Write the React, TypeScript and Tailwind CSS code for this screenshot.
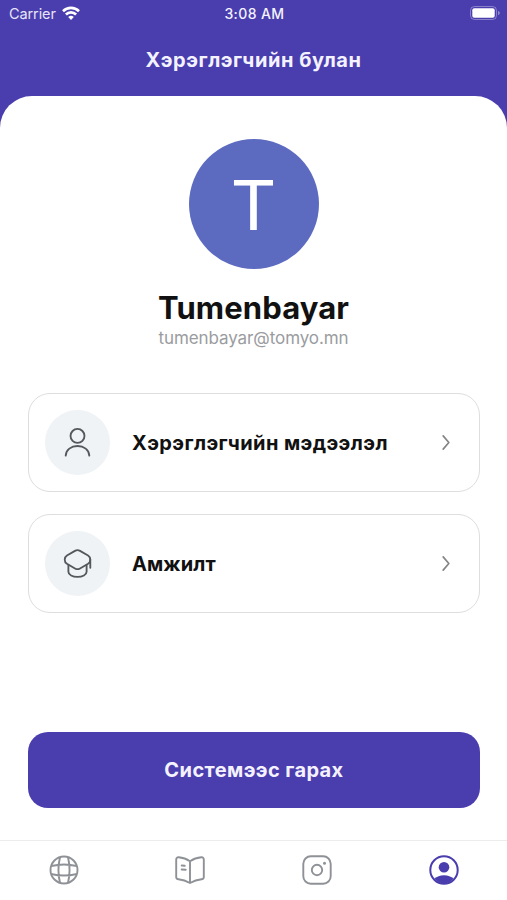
import React from 'react';

type IconProps = { className?: string };

const WifiIcon: React.FC<IconProps> = ({ className }) => (
  <svg className={className} viewBox="0 0 18 14" fill="none" stroke="currentColor" strokeWidth="2.6">
    <path d="M1 5.200a11.400 11.400 0 0 1 16 0" />
    <path d="M3.900 8.500a7.200 7.200 0 0 1 10.200 0" />
    <path d="M9 13.900 6.200 11.100a4 4 0 0 1 5.600 0z" fill="currentColor" stroke="none" />
  </svg>
);

const BatteryIcon: React.FC<IconProps> = ({ className }) => (
  <svg className={className} viewBox="0 0 30 14" fill="none">
    <rect x="0.5" y="0.5" width="26" height="13" rx="4" stroke="#fff" strokeOpacity="0.35" />
    <rect x="2.3" y="2.3" width="22.4" height="9.4" rx="2" fill="#fff" />
    <path d="M28 5v4c1.2-.3 1.8-1 1.8-2S29.200 5.300 28 5z" fill="#fff" fillOpacity="0.4" />
  </svg>
);

const UserIcon: React.FC<IconProps> = ({ className }) => (
  <svg className={className} viewBox="0 0 32 32" fill="none" stroke="currentColor" strokeWidth="1.9" strokeLinecap="round">
    <circle cx="16" cy="9.2" r="7.2" />
    <path d="M3.800 29.500C4.200 23.600 9.300 19.600 16 19.600s11.800 4 12.200 9.900" />
  </svg>
);

const GraduationIcon: React.FC<IconProps> = ({ className }) => (
  <svg className={className} viewBox="0 0 32 32" fill="none" stroke="currentColor" strokeWidth="1.9" strokeLinecap="round" strokeLinejoin="round">
    <path d="M13.400 3q2.600-1.500 5.200 0l8.300 4.800Q29.200 9.300 29.200 12t-2.300 4.200l-8.300 4.900q-2.600 1.500-5.200 0l-8.300-4.900Q2.800 14.700 2.800 12t2.300-4.200z" />
    <path d="M6.600 17.500v7c0 3.200 4.300 5.300 9.400 5.300s9.400-2.100 9.400-5.300v-7M29.200 12v8.500" />
  </svg>
);

const ChevronIcon: React.FC<IconProps> = ({ className }) => (
  <svg className={className} viewBox="0 0 10 18" fill="none" stroke="currentColor" strokeWidth="1.800" strokeLinecap="round" strokeLinejoin="round">
    <path d="m2 2 6 7-6 7" />
  </svg>
);

const GlobeIcon: React.FC<IconProps> = ({ className }) => (
  <svg className={className} viewBox="0 0 30 30" fill="none" stroke="currentColor" strokeWidth="1.900">
    <circle cx="15" cy="15" r="13.500" />
    <path d="M11 2.200c-2 8.200-2 17.400 0 25.600M19 2.200c2 8.200 2 17.400 0 25.600M2.200 11c8.200-2 17.400-2 25.600 0M2.200 19c8.200 2 17.400 2 25.600 0" />
  </svg>
);

const BookIcon: React.FC<IconProps> = ({ className }) => (
  <svg className={className} viewBox="0 0 30 30" fill="none" stroke="currentColor" strokeWidth="1.900" strokeLinecap="round" strokeLinejoin="round">
    <path d="M15 6.200C11.800 4 8 2.600 3.700 2.300Q1.200 2.100 1.200 4.800v17.100q0 2.200 2.300 2.400C7.800 24.700 11.500 26 15 28c3.500-2 7.200-3.300 11.500-3.700q2.300-.2 2.300-2.400V4.800q0-2.700-2.500-2.500C22 2.600 18.200 4 15 6.200zM15 6.200V28" />
    <path d="m6.700 10.500 3 .3M6.700 14.500l4 .3" />
  </svg>
);

const InstagramIcon: React.FC<IconProps> = ({ className }) => (
  <svg className={className} viewBox="0 0 30 30" fill="none" stroke="currentColor" strokeWidth="1.900">
    <rect x="1.300" y="1.300" width="27.400" height="27.400" rx="7.500" />
    <circle cx="15" cy="15" r="5.200" />
    <circle cx="22.500" cy="8.300" r="1.500" fill="currentColor" stroke="none" />
  </svg>
);

const ProfileIcon: React.FC<IconProps> = ({ className }) => (
  <svg className={className} viewBox="0 0 30 30" fill="none">
    <circle cx="15" cy="15" r="13.700" stroke="currentColor" strokeWidth="2" />
    <circle cx="15" cy="12.300" r="5.300" fill="currentColor" />
    <path d="M5.500 23.700C7.800 21.600 11 20.300 15 20.300s7.200 1.300 9.500 3.400A13.500 13.500 0 0 1 15 28.500a13.500 13.500 0 0 1-9.500-4.800z" fill="currentColor" />
  </svg>
);

const MENU_ITEMS = [
  { label: 'Хэрэглэгчийн мэдээлэл', icon: <UserIcon className="h-[31px] w-[31px]" />, spacing: 'tracking-[0.41px]' },
  { label: 'Амжилт', icon: <GraduationIcon className="h-[31px] w-[31px]" />, spacing: 'tracking-[0.1px]' },
];

const TABS = [
  { name: 'Home', icon: <GlobeIcon className="ml-0.5 h-[30px] w-[30px]" /> },
  { name: 'Lessons', icon: <BookIcon className="h-[30px] w-[30px]" /> },
  { name: 'Instagram', icon: <InstagramIcon className="h-[30px] w-[30px]" /> },
  { name: 'Profile', icon: <ProfileIcon className="h-[30px] w-[30px]" />, active: true },
];

const StatusBar: React.FC = () => (
  <div className="grid h-7 grid-cols-3 items-center pl-[9px] pr-[7px] text-white">
    <div className="flex items-center gap-1.5 pb-0.5">
      <span className="pt-0.5 text-[14.500px] leading-none tracking-[-0.1px] text-[#e7e4f8]">Carrier</span>
      <WifiIcon className="h-3.5 w-[18px]" />
    </div>
    <span className="text-center text-[14px] font-medium leading-none tracking-[0.4px] text-[#f4f2ff]">3:08 AM</span>
    <BatteryIcon className="mb-0.5 h-3.5 w-[30px] justify-self-end" />
  </div>
);

const App: React.FC = () => {
  return (
    <div className="flex h-[900px] w-full flex-col bg-[#4a3dad] font-[Inter,'Noto_Sans',sans-serif]">
      <StatusBar />
      <header className="flex h-[68px] items-center justify-center pb-1">
        <h1 className="text-[20px] font-bold leading-none tracking-[0.55px] text-[#f4f2ff]">Хэрэглэгчийн булан</h1>
      </header>

      <main className="flex flex-1 flex-col rounded-t-[32px] bg-white px-7 pt-[43px]">
        <div className="flex flex-col items-center">
          <div className="flex h-[130px] w-[130px] items-center justify-center rounded-full bg-[#5c6bc0]">
            <span className="pt-0.5 font-[Roboto,sans-serif] text-[71px] leading-none text-white">T</span>
          </div>
          <h2 className="mt-5 text-[31px] font-bold leading-[38px] tracking-[0.1px] text-[#111]">Tumenbayar</h2>
          <p className="text-[17px] leading-[22px] tracking-[-0.08px] text-[#9a9ca0]">tumenbayar@tomyo.mn</p>
        </div>

        <div className="mt-[44px] flex flex-col gap-[22px]">
          {MENU_ITEMS.map((item) => (
            <button
              key={item.label}
              className="flex h-[99px] w-[452px] items-center rounded-[22px] border border-[#dedede] pl-4 pr-7 text-left"
            >
              <span className="flex h-[65px] w-[65px] items-center justify-center rounded-full bg-[#eff3f6] text-[#54575b]">
                {item.icon}
              </span>
              <span className={`ml-[22px] flex-1 text-[20px] font-bold leading-none text-[#111] ${item.spacing}`}>
                {item.label}
              </span>
              <ChevronIcon className="h-[17px] w-2.5 text-[#858585]" />
            </button>
          ))}
        </div>

        <button className="mt-[119px] h-[76px] w-[452px] rounded-[20px] bg-[#4a3dad] text-[20px] font-bold leading-none tracking-[0.4px] text-[#f4f2ff]">
          Системээс гарах
        </button>
      </main>

      <nav className="grid h-[60px] grid-cols-4 border-t border-[#ececec] bg-white">
        {TABS.map((tab) => (
          <button
            key={tab.name}
            aria-label={tab.name}
            className={`flex items-center justify-center pb-px ${tab.active ? 'text-[#4a3dad]' : 'text-[#8e9196]'}`}
          >
            {tab.icon}
          </button>
        ))}
      </nav>
    </div>
  );
};

export default App;
